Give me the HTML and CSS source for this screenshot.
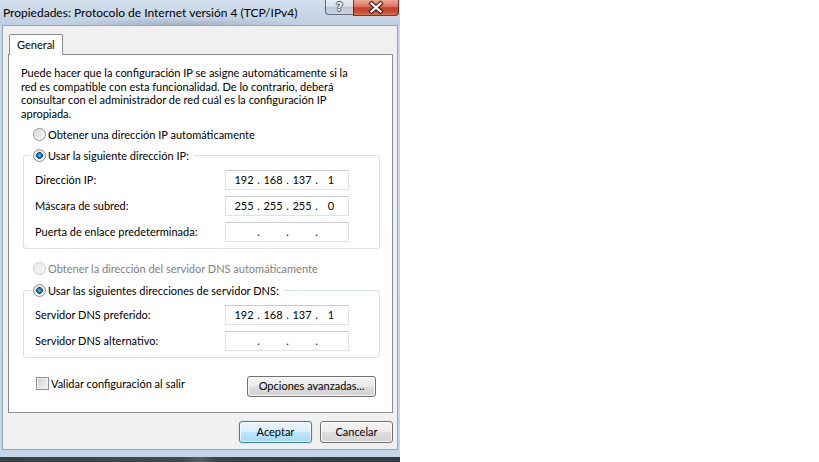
FILE: index.html
```html
<!DOCTYPE html>
<html lang="es">
<head>
<meta charset="utf-8">
<title>Propiedades: Protocolo de Internet versión 4 (TCP/IPv4)</title>
<link rel="stylesheet" href="styles.css">
</head>
<body>
<div class="screen">
  <div class="window">
    <div class="titlebar">
      <span class="title">Propiedades: Protocolo de Internet versión 4 (TCP/IPv4)</span>
      <div class="caption">
        <span class="cap-btn cap-help">?</span>
        <span class="cap-btn cap-close">
          <svg width="44" height="15" viewBox="0 0 44 15" aria-hidden="true">
            <path d="M17.5 3.5 L26.5 11.5 M26.5 3.5 L17.5 11.5" stroke="#4a1c14" stroke-width="4.4" stroke-linecap="square" fill="none"/>
            <path d="M17.5 3.5 L26.5 11.5 M26.5 3.5 L17.5 11.5" stroke="#ffffff" stroke-width="2.3" stroke-linecap="square" fill="none"/>
          </svg>
        </span>
      </div>
    </div>
    <div class="frame">
      <div class="client">
        <div class="tabs">
          <span class="tab active">General</span>
        </div>
        <div class="panel">
          <p class="intro">Puede hacer que la configuración IP se asigne automáticamente si la<br>red es compatible con esta funcionalidad. De lo contrario, deberá<br>consultar con el administrador de red cuál es la configuración IP<br>apropiada.</p>

          <div class="option"><span class="radio"></span>Obtener una dirección IP automáticamente</div>

          <fieldset class="group">
            <legend><span class="option-inline"><span class="radio checked"></span>Usar la siguiente dirección IP:</span></legend>
            <div class="field">
              <span class="label">Dirección IP:</span>
              <span class="ip"><span class="oct">192</span><span class="dot">.</span><span class="oct">168</span><span class="dot">.</span><span class="oct">137</span><span class="dot">.</span><span class="oct">1</span></span>
            </div>
            <div class="field">
              <span class="label">Máscara de subred:</span>
              <span class="ip"><span class="oct">255</span><span class="dot">.</span><span class="oct">255</span><span class="dot">.</span><span class="oct">255</span><span class="dot">.</span><span class="oct">0</span></span>
            </div>
            <div class="field">
              <span class="label">Puerta de enlace predeterminada:</span>
              <span class="ip"><span class="oct"></span><span class="dot">.</span><span class="oct"></span><span class="dot">.</span><span class="oct"></span><span class="dot">.</span><span class="oct"></span></span>
            </div>
          </fieldset>

          <div class="option option-dns disabled"><span class="radio"></span>Obtener la dirección del servidor DNS automáticamente</div>

          <fieldset class="group group-dns">
            <legend><span class="option-inline"><span class="radio checked"></span>Usar las siguientes direcciones de servidor DNS:</span></legend>
            <div class="field">
              <span class="label">Servidor DNS preferido:</span>
              <span class="ip"><span class="oct">192</span><span class="dot">.</span><span class="oct">168</span><span class="dot">.</span><span class="oct">137</span><span class="dot">.</span><span class="oct">1</span></span>
            </div>
            <div class="field">
              <span class="label">Servidor DNS alternativo:</span>
              <span class="ip"><span class="oct"></span><span class="dot">.</span><span class="oct"></span><span class="dot">.</span><span class="oct"></span><span class="dot">.</span><span class="oct"></span></span>
            </div>
          </fieldset>

          <div class="panel-footer">
            <div class="check-option"><span class="checkbox"></span>Validar configuración al salir</div>
            <button class="btn btn-advanced" type="button">Opciones avanzadas...</button>
          </div>
        </div>
        <div class="dialog-buttons">
          <button class="btn btn-default" type="button">Aceptar</button>
          <button class="btn" type="button">Cancelar</button>
        </div>
      </div>
    </div>
  </div>
  <div class="taskbar"></div>
</div>
</body>
</html>
```
FILE: styles.css
```css
* {
  box-sizing: border-box;
}

html,
body {
  margin: 0;
  padding: 0;
}

body {
  width: 819px;
  height: 462px;
  overflow: hidden;
  background: #ffffff;
  font-family: "Lato", "Liberation Sans", sans-serif;
  font-size: 11px;
  color: #000000;
}

.screen {
  width: 400px;
  display: flex;
  flex-direction: column;
}

/* ---------- window chrome ---------- */

.window {
  width: 400px;
  height: 457px;
  display: flex;
  flex-direction: column;
  background: #c4d7ec;
}

.titlebar {
  height: 25px;
  display: flex;
  align-items: flex-start;
  background:
    radial-gradient(ellipse 120px 8px at 45% 100%, rgba(95, 105, 120, 0.28), rgba(95, 105, 120, 0) 100%),
    linear-gradient(180deg, #d3dfec 0%, #c9d7e7 55%, #bfcfe1 100%);
}

.title {
  flex: 1;
  padding: 6px 0 0 3px;
  font-size: 12px;
  line-height: 14px;
  white-space: nowrap;
}

.caption {
  display: flex;
  margin-right: 1px;
}

.cap-btn {
  height: 16px;
  display: flex;
  align-items: center;
  justify-content: center;
  border: 1px solid rgba(52, 66, 84, 0.75);
  border-top: 0;
}

.cap-help {
  width: 28px;
  height: 15px;
  border-right: 0;
  border-radius: 0 0 0 4px;
  background: linear-gradient(180deg, #e6ecf3 0%, #d8e0ea 45%, #bcc8d6 52%, #cbd6e2 100%);
  font-family: "DejaVu Sans", sans-serif;
  font-weight: bold;
  font-size: 12px;
  line-height: 14px;
  color: #f4f6f8;
  text-shadow:
    1px 0 0 #4a5566,
    -1px 0 0 #4a5566,
    0 1px 0 #4a5566,
    0 -1px 0 #4a5566;
}

.cap-close {
  width: 46px;
  border-color: rgba(90, 30, 22, 0.8);
  border-radius: 0 0 4px 0;
  background: linear-gradient(180deg, #eaa999 0%, #dc7764 42%, #c6412c 52%, #c94933 78%, #dc7456 100%);
}

.frame {
  flex: 1;
  display: flex;
  padding: 0 2px 7px 2px;
  background: linear-gradient(180deg, #c9d9ea 0%, #c2d6ec 100%);
}

.client {
  flex: 1;
  display: flex;
  flex-direction: column;
  background: #f0f0f0;
  border: 1px solid #98a4b1;
  padding: 8px 4px 6px 5px;
}

/* ---------- tab control ---------- */

.tabs {
  height: 20px;
  display: flex;
  align-items: flex-end;
}

.tab {
  position: relative;
  z-index: 1;
  height: 21px;
  margin: 0 0 -1px 1px;
  padding: 0 7px;
  line-height: 19px;
  border: 1px solid #898c95;
  border-bottom: 0;
  border-radius: 2px 2px 0 0;
  background: #ffffff;
}

.panel {
  flex: 1;
  border: 1px solid #898c95;
  background: #ffffff;
  padding: 11px 0 0 0;
}

.intro {
  margin: 0 0 0 12px;
  line-height: 13.7px;
  white-space: nowrap;
}

/* ---------- radio buttons & check box ---------- */

.option,
.option-inline {
  display: flex;
  align-items: center;
  gap: 2px;
  line-height: 14px;
  white-space: nowrap;
}

.option {
  margin: 7px 0 0 24px;
}

.option-dns {
  margin-top: 13px;
}

.disabled {
  color: #7f7f7f;
}

.radio {
  flex: none;
  width: 13px;
  height: 13px;
  border-radius: 50%;
  border: 1px solid #8d9094;
  background: linear-gradient(135deg, #cdd0d3 0%, #e9eaeb 55%, #fafafa 100%);
  box-shadow: inset 0 0 0 1px rgba(255, 255, 255, 0.55);
}

.radio.checked {
  background:
    radial-gradient(circle at 50% 50%, #7cc3f2 0, #2d7fc4 1.6px, #14497d 3.1px, rgba(20, 73, 125, 0) 3.6px),
    linear-gradient(135deg, #cdd0d3 0%, #e9eaeb 55%, #fafafa 100%);
}

.disabled .radio {
  border-color: #c4c6c8;
  background: linear-gradient(135deg, #e6e7e8 0%, #f4f4f4 100%);
}

.check-option {
  display: flex;
  align-items: center;
  gap: 2px;
  margin-top: 1px;
  line-height: 14px;
  white-space: nowrap;
}

.checkbox {
  flex: none;
  width: 13px;
  height: 13px;
  border: 1px solid #8e8f8f;
  background: linear-gradient(135deg, #c9cacb 0%, #e4e4e4 55%, #f7f7f7 100%);
  box-shadow: inset 0 0 0 1px #f4f4f4;
}

/* ---------- group boxes ---------- */

.group {
  margin: 7px 12px 0 14px;
  padding: 7px 30px 6px 7px;
  border: 1px solid #d5dfe5;
  border-radius: 3px;
  min-width: 0;
}

.group-dns {
  margin-top: 8px;
}

.group legend {
  padding: 0 5px 0 2px;
  line-height: 14px;
}

.field {
  height: 20px;
  display: flex;
  align-items: center;
  justify-content: space-between;
  padding-left: 4px;
  white-space: nowrap;
}

.field + .field {
  margin-top: 6px;
}

.label {
  line-height: 14px;
}

.ip {
  flex: none;
  width: 124px;
  height: 20px;
  display: flex;
  align-items: center;
  padding-left: 6px;
  border: 1px solid #dfe2e7;
  border-top-color: #c6cad1;
  background: #ffffff;
  line-height: 14px;
}

.oct {
  width: 24px;
  text-align: center;
}

.dot {
  width: 5px;
  text-align: center;
}

/* ---------- push buttons ---------- */

.btn {
  height: 22px;
  padding: 0;
  font: inherit;
  color: #000000;
  line-height: 18px;
  border: 1px solid #707070;
  border-radius: 3px;
  background: linear-gradient(180deg, #f4f4f4 0%, #ececec 48%, #dedede 52%, #d2d2d2 100%);
  box-shadow: inset 0 0 0 1px rgba(255, 255, 255, 0.8);
}

.panel-footer {
  display: flex;
  align-items: flex-start;
  justify-content: space-between;
  margin: 18px 16px 0 27px;
}

.btn-advanced {
  width: 129px;
  height: 21px;
}

.dialog-buttons {
  display: flex;
  justify-content: flex-end;
  gap: 8px;
  margin-top: 8px;
}

.dialog-buttons .btn {
  width: 73px;
}

.btn-default {
  border-color: #3c7fb1;
  background: linear-gradient(180deg, #eaf6fd 0%, #d9f0fc 48%, #bee6fd 52%, #a7d9f5 100%);
  box-shadow: inset 0 0 0 1px rgba(255, 255, 255, 0.7), 0 0 1px rgba(60, 127, 177, 0.6);
}

/* ---------- desktop strip below the window ---------- */

.taskbar {
  width: 400px;
  height: 5px;
  background: linear-gradient(90deg, #3c3f44 0%, #45484d 46%, #5a5d61 50%, #3e4146 54%, #36393d 100%);
}
```
